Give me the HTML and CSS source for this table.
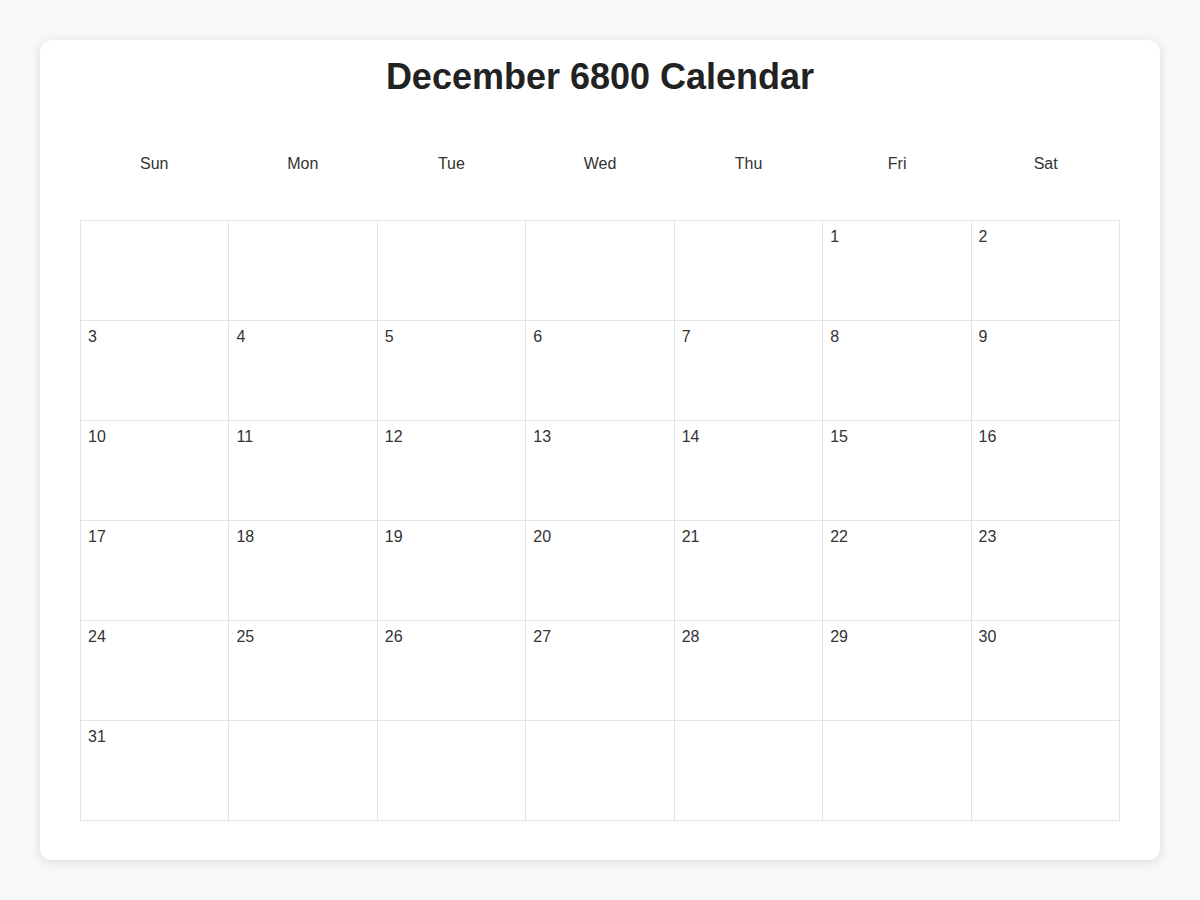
FILE: index.html
```html
<!DOCTYPE html>
<html lang="en">
<head>
<meta charset="utf-8">
<title>December 6800 Calendar</title>
<link rel="stylesheet" href="styles.css">
</head>
<body>
<div class="card">
  <h1 class="title">December 6800 Calendar</h1>
  <div class="weekdays">
    <div class="wd">Sun</div><div class="wd">Mon</div><div class="wd">Tue</div><div class="wd">Wed</div><div class="wd">Thu</div><div class="wd">Fri</div><div class="wd">Sat</div>
  </div>
  <div class="grid">
    <div class="cell"></div><div class="cell"></div><div class="cell"></div><div class="cell"></div><div class="cell"></div><div class="cell">1</div><div class="cell">2</div>
    <div class="cell">3</div><div class="cell">4</div><div class="cell">5</div><div class="cell">6</div><div class="cell">7</div><div class="cell">8</div><div class="cell">9</div>
    <div class="cell">10</div><div class="cell">11</div><div class="cell">12</div><div class="cell">13</div><div class="cell">14</div><div class="cell">15</div><div class="cell">16</div>
    <div class="cell">17</div><div class="cell">18</div><div class="cell">19</div><div class="cell">20</div><div class="cell">21</div><div class="cell">22</div><div class="cell">23</div>
    <div class="cell">24</div><div class="cell">25</div><div class="cell">26</div><div class="cell">27</div><div class="cell">28</div><div class="cell">29</div><div class="cell">30</div>
    <div class="cell">31</div><div class="cell"></div><div class="cell"></div><div class="cell"></div><div class="cell"></div><div class="cell"></div><div class="cell"></div>
  </div>
</div>
</body>
</html>
```
FILE: styles.css
```css
* { box-sizing: border-box; }
html, body { margin: 0; padding: 0; }
body {
  background: #f7f8fa;
  font-family: "Liberation Sans", Arial, sans-serif;
  color: #333;
  padding: 40px;
}
.card {
  background: #fff;
  border-radius: 12px;
  box-shadow: 0 2px 10px rgba(0, 0, 0, 0.12);
  padding: 17px 40px 40px;
  height: 820px;
}
.title {
  margin: 0;
  text-align: center;
  font-size: 36px;
  line-height: 40px;
  font-weight: bold;
  color: #222;
}
.weekdays {
  display: grid;
  grid-template-columns: repeat(7, 1fr);
  margin-top: 33px;
  height: 90px;
  align-items: center;
}
.wd {
  text-align: center;
  font-size: 16px;
  line-height: 18px;
  color: #333;
  margin-top: -22px;
}
.grid {
  display: grid;
  grid-template-columns: repeat(7, 1fr);
  grid-auto-rows: 100px;
  border-top: 1px solid #e3e3e3;
  border-left: 1px solid #e3e3e3;
}
.cell {
  border-right: 1px solid #e3e3e3;
  border-bottom: 1px solid #e3e3e3;
  padding: 7px 7px;
  font-size: 16px;
  line-height: 18px;
  color: #333;
}
```
